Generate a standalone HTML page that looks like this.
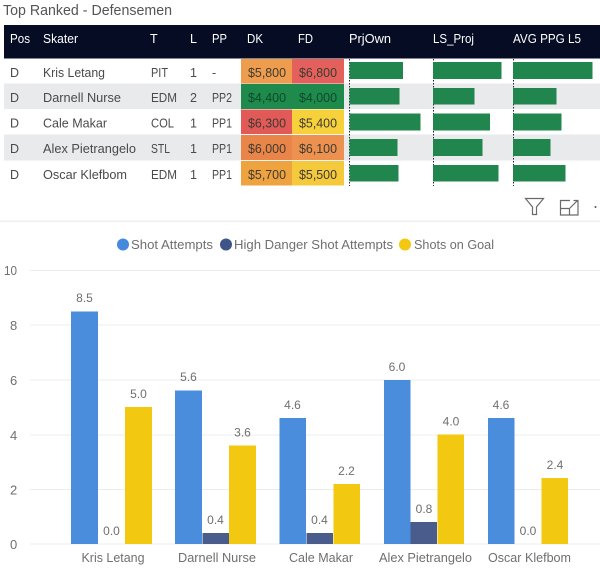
<!DOCTYPE html>
<html><head><meta charset="utf-8"><style>
html,body{margin:0;padding:0;background:#fff;width:600px;height:572px;overflow:hidden}
svg{display:block;font-family:"Liberation Sans",sans-serif;filter:blur(.25px)}
.c{font-size:12.5px;fill:#4a4a4a}
.d{font-size:12.5px;fill:#3d3a30}
.h{font-size:12.5px;fill:#fff}
.a{font-size:13px;fill:#6f6f6f}
.l{font-size:12px;fill:#6f6f6f;text-anchor:middle}
</style></head><body>
<svg width="600" height="572" viewBox="0 0 600 572" xmlns="http://www.w3.org/2000/svg">
<text x="3" y="15" font-size="15" fill="#555" textLength="169" lengthAdjust="spacingAndGlyphs">Top Ranked - Defensemen</text>
<rect x="4" y="25" width="596" height="33.5" fill="#060c24"/>
<text class="h" x="10" y="43" textLength="20" lengthAdjust="spacingAndGlyphs">Pos</text>
<text class="h" x="43" y="43" textLength="35" lengthAdjust="spacingAndGlyphs">Skater</text>
<text class="h" x="150" y="43">T</text>
<text class="h" x="190" y="43">L</text>
<text class="h" x="212" y="43" textLength="15" lengthAdjust="spacingAndGlyphs">PP</text>
<text class="h" x="247" y="43" textLength="16" lengthAdjust="spacingAndGlyphs">DK</text>
<text class="h" x="298" y="43" textLength="15" lengthAdjust="spacingAndGlyphs">FD</text>
<text class="h" x="349" y="43" textLength="42" lengthAdjust="spacingAndGlyphs">PrjOwn</text>
<text class="h" x="433" y="43" textLength="41" lengthAdjust="spacingAndGlyphs">LS_Proj</text>
<text class="h" x="513" y="43" textLength="68" lengthAdjust="spacingAndGlyphs">AVG PPG L5</text>

<rect x="4" y="83.5" width="596" height="25.5" fill="#e9eaec"/>
<rect x="4" y="134.5" width="596" height="26" fill="#e9eaec"/>

<rect x="241" y="59" width="51" height="24.5" fill="#ee9c4e"/><rect x="292" y="59" width="52" height="24.5" fill="#e4605c"/>
<rect x="241" y="84" width="51" height="25" fill="#1e8a4c"/><rect x="292" y="84" width="52" height="25" fill="#1e8a4c"/>
<rect x="241" y="109.5" width="51" height="24.5" fill="#e25a58"/><rect x="292" y="109.5" width="52" height="24.5" fill="#f7d13c"/>
<rect x="241" y="135" width="51" height="25" fill="#ea8549"/><rect x="292" y="135" width="52" height="25" fill="#ec9150"/>
<rect x="241" y="161" width="51" height="24.5" fill="#efa33f"/><rect x="292" y="161" width="52" height="24.5" fill="#f5c93c"/>

<text class="c" x="10" y="77">D</text><text class="c" x="43" y="77" textLength="62" lengthAdjust="spacingAndGlyphs">Kris Letang</text><text class="c" x="151" y="77" textLength="17" lengthAdjust="spacingAndGlyphs">PIT</text><text class="c" x="190" y="77">1</text><text class="c" x="212" y="77">-</text>
<text class="c" x="10" y="102">D</text><text class="c" x="43" y="102" textLength="78" lengthAdjust="spacingAndGlyphs">Darnell Nurse</text><text class="c" x="151" y="102" textLength="26" lengthAdjust="spacingAndGlyphs">EDM</text><text class="c" x="190" y="102">2</text><text class="c" x="212" y="102" textLength="20" lengthAdjust="spacingAndGlyphs">PP2</text>
<text class="c" x="10" y="127.5">D</text><text class="c" x="43" y="127.5" textLength="64" lengthAdjust="spacingAndGlyphs">Cale Makar</text><text class="c" x="151" y="127.5" textLength="23" lengthAdjust="spacingAndGlyphs">COL</text><text class="c" x="190" y="127.5">1</text><text class="c" x="212" y="127.5" textLength="20" lengthAdjust="spacingAndGlyphs">PP1</text>
<text class="c" x="10" y="153">D</text><text class="c" x="43" y="153" textLength="93" lengthAdjust="spacingAndGlyphs">Alex Pietrangelo</text><text class="c" x="151" y="153" textLength="19" lengthAdjust="spacingAndGlyphs">STL</text><text class="c" x="190" y="153">1</text><text class="c" x="212" y="153" textLength="20" lengthAdjust="spacingAndGlyphs">PP1</text>
<text class="c" x="10" y="179">D</text><text class="c" x="43" y="179" textLength="84" lengthAdjust="spacingAndGlyphs">Oscar Klefbom</text><text class="c" x="151" y="179" textLength="26" lengthAdjust="spacingAndGlyphs">EDM</text><text class="c" x="190" y="179">1</text><text class="c" x="212" y="179" textLength="20" lengthAdjust="spacingAndGlyphs">PP1</text>

<text class="d" x="248" y="77" textLength="38" lengthAdjust="spacingAndGlyphs">$5,800</text><text class="d" x="299" y="77" textLength="38" lengthAdjust="spacingAndGlyphs">$6,800</text>
<text class="d" x="248" y="102" textLength="38" lengthAdjust="spacingAndGlyphs" style="fill:#0e4a2a">$4,400</text><text class="d" x="299" y="102" textLength="38" lengthAdjust="spacingAndGlyphs" style="fill:#0e4a2a">$4,000</text>
<text class="d" x="248" y="127.5" textLength="38" lengthAdjust="spacingAndGlyphs">$6,300</text><text class="d" x="299" y="127.5" textLength="38" lengthAdjust="spacingAndGlyphs">$5,400</text>
<text class="d" x="248" y="153" textLength="38" lengthAdjust="spacingAndGlyphs">$6,000</text><text class="d" x="299" y="153" textLength="38" lengthAdjust="spacingAndGlyphs">$6,100</text>
<text class="d" x="248" y="179" textLength="38" lengthAdjust="spacingAndGlyphs">$5,700</text><text class="d" x="299" y="179" textLength="38" lengthAdjust="spacingAndGlyphs">$5,500</text>

<g stroke="#1a2a2a" stroke-width="1" stroke-dasharray="1.5 1.5">
<line x1="349.5" y1="59" x2="349.5" y2="186"/><line x1="433.5" y1="59" x2="433.5" y2="186"/><line x1="513.5" y1="59" x2="513.5" y2="186"/>
</g>
<g fill="#20864d">
<rect x="349.5" y="62" width="53.5" height="17"/><rect x="433" y="62" width="68.5" height="17"/><rect x="513" y="62" width="79.5" height="17"/>
<rect x="349.5" y="88" width="50" height="16.5"/><rect x="433" y="88" width="41.5" height="16.5"/><rect x="513" y="88" width="43.5" height="16.5"/>
<rect x="349.5" y="113.5" width="71" height="17"/><rect x="433" y="113.5" width="57" height="17"/><rect x="513" y="113.5" width="48.5" height="17"/>
<rect x="349.5" y="139" width="48" height="17"/><rect x="433" y="139" width="49.5" height="17"/><rect x="513" y="139" width="37.5" height="17"/>
<rect x="349.5" y="165" width="49" height="16.5"/><rect x="433" y="165" width="65.5" height="16.5"/><rect x="513" y="165" width="52.5" height="16.5"/>
</g>

<g fill="none" stroke="#6a6a6a" stroke-width="1.2">
<path d="M525.5 198.5H543.5L536.5 207V214.5H532.5V207Z"/>
<path d="M570 200.5H560.5V215H578V205M560.5 208.5H569.5V215M570 208L577.5 200.5M573.5 200.5H578V205"/>
</g>
<circle cx="595.5" cy="207" r="1" fill="#555"/>
<rect x="0" y="220.5" width="600" height="1.5" fill="#efefef"/>

<circle cx="123" cy="244.5" r="6" fill="#4489dd"/>
<text class="a" x="131" y="249" textLength="82" lengthAdjust="spacingAndGlyphs">Shot Attempts</text>
<circle cx="226" cy="244.5" r="6" fill="#3f5488"/>
<text class="a" x="234" y="249" textLength="159" lengthAdjust="spacingAndGlyphs">High Danger Shot Attempts</text>
<circle cx="405" cy="244.5" r="6" fill="#f2c811"/>
<text class="a" x="414" y="249" textLength="80" lengthAdjust="spacingAndGlyphs">Shots on Goal</text>

<g stroke="#ececec" stroke-width="1">
<line x1="30" y1="270.5" x2="600" y2="270.5"/><line x1="30" y1="325" x2="600" y2="325"/><line x1="30" y1="380" x2="600" y2="380"/><line x1="30" y1="435" x2="600" y2="435"/><line x1="30" y1="489.5" x2="600" y2="489.5"/><line x1="30" y1="544" x2="600" y2="544"/>
</g>
<text class="a" x="4" y="275" textLength="13" lengthAdjust="spacingAndGlyphs">10</text>
<text class="a" x="10" y="330">8</text><text class="a" x="10" y="385">6</text><text class="a" x="10" y="440">4</text><text class="a" x="10" y="494.5">2</text><text class="a" x="10" y="549">0</text>

<g fill="#4a8ddc">
<rect x="71" y="311.5" width="27" height="232.5"/><rect x="175" y="390.5" width="27" height="153.5"/><rect x="279.5" y="418" width="26.5" height="126"/><rect x="384" y="380" width="26.5" height="164"/><rect x="488" y="418" width="26.5" height="126"/>
</g>
<g fill="#4a5c8c">
<rect x="202.5" y="533" width="26.5" height="11"/><rect x="306.5" y="533" width="26.5" height="11"/><rect x="410.5" y="522" width="26.5" height="22"/>
</g>
<g fill="#f2c811">
<rect x="125" y="407" width="27" height="137"/><rect x="229" y="445.5" width="27" height="98.5"/><rect x="333.5" y="484" width="26.5" height="60"/><rect x="437.5" y="434.5" width="26.5" height="109.5"/><rect x="541.5" y="478" width="26.5" height="66"/>
</g>

<text class="l" x="84.5" y="302">8.5</text><text class="l" x="111.5" y="535">0.0</text><text class="l" x="138.5" y="398">5.0</text>
<text class="l" x="188.5" y="381">5.6</text><text class="l" x="215.5" y="524">0.4</text><text class="l" x="242.5" y="436.5">3.6</text>
<text class="l" x="292.5" y="409">4.6</text><text class="l" x="319.5" y="524">0.4</text><text class="l" x="346.5" y="475">2.2</text>
<text class="l" x="397" y="371">6.0</text><text class="l" x="424" y="513">0.8</text><text class="l" x="451" y="425.5">4.0</text>
<text class="l" x="501" y="409">4.6</text><text class="l" x="528" y="535">0.0</text><text class="l" x="555" y="469">2.4</text>

<text class="a" x="81.5" y="562" textLength="63" lengthAdjust="spacingAndGlyphs">Kris Letang</text>
<text class="a" x="178" y="562" textLength="78" lengthAdjust="spacingAndGlyphs">Darnell Nurse</text>
<text class="a" x="289" y="562" textLength="64" lengthAdjust="spacingAndGlyphs">Cale Makar</text>
<text class="a" x="379" y="562" textLength="93" lengthAdjust="spacingAndGlyphs">Alex Pietrangelo</text>
<text class="a" x="488" y="562" textLength="83" lengthAdjust="spacingAndGlyphs">Oscar Klefbom</text>
</svg>
</body></html>
